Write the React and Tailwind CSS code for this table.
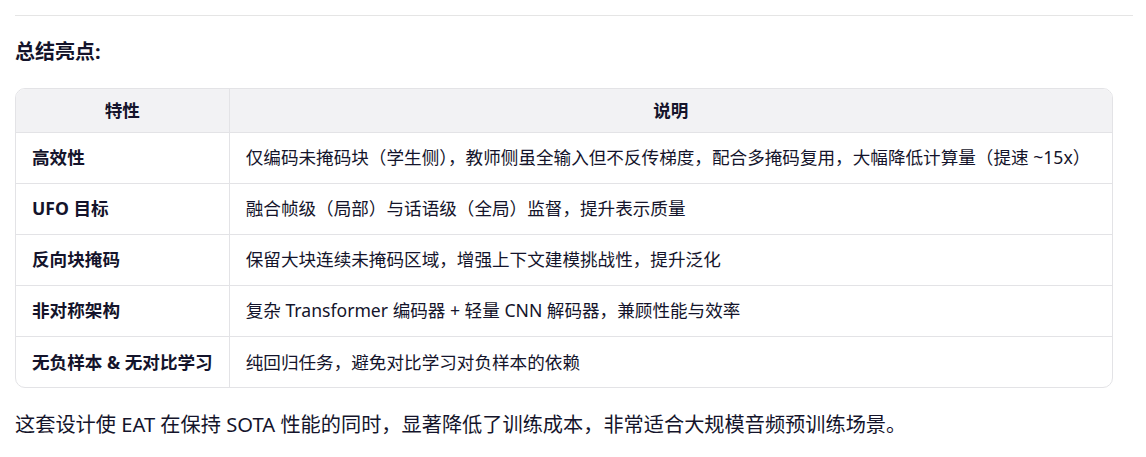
import React from "react";

const rows = [
  ["高效性", "仅编码未掩码块（学生侧），教师侧虽全输入但不反传梯度，配合多掩码复用，大幅降低计算量（提速 ~15x）"],
  ["UFO 目标", "融合帧级（局部）与话语级（全局）监督，提升表示质量"],
  ["反向块掩码", "保留大块连续未掩码区域，增强上下文建模挑战性，提升泛化"],
  ["非对称架构", "复杂 Transformer 编码器 + 轻量 CNN 解码器，兼顾性能与效率"],
  ["无负样本 & 无对比学习", "纯回归任务，避免对比学习对负样本的依赖"],
];

const App = () => {
  return (
    <div
      className="w-[1146px] h-[457px] bg-white text-[#14142b] overflow-hidden"
      style={{ fontFamily: '"Noto Sans", "Noto Sans CJK SC", sans-serif' }}
    >
      <div className="ml-[15px] w-[1118px] pt-[15px]">
        <div className="h-px bg-[#e5e5e5]" />

        <h3 className="mt-[22px] text-[20px] leading-[28px] font-bold">总结亮点:</h3>

        <div className="mt-[22px] w-[1098px] border border-[#e3e3e6] rounded-[10px] overflow-hidden">
          <table className="w-full border-collapse text-[17.6px]">
            <thead>
              <tr className="bg-[#f2f2f4] h-[43px]">
                <th className="w-[213px] px-4 font-bold text-center border-r border-[#e3e3e6]">特性</th>
                <th className="px-4 font-bold text-center">说明</th>
              </tr>
            </thead>
            <tbody>
              {rows.map(([k, v]) => (
                <tr key={k} className="h-[51px] border-t border-[#e3e3e6]">
                  <td className="px-4 font-bold border-r border-[#e3e3e6] whitespace-nowrap">{k}</td>
                  <td className="px-4 whitespace-nowrap">{v}</td>
                </tr>
              ))}
            </tbody>
          </table>
        </div>

        <p className="mt-[21px] text-[20.2px] leading-[30px]">
          这套设计使 EAT 在保持 SOTA 性能的同时，显著降低了训练成本，非常适合大规模音频预训练场景。
        </p>
      </div>
    </div>
  );
};

export default App;
